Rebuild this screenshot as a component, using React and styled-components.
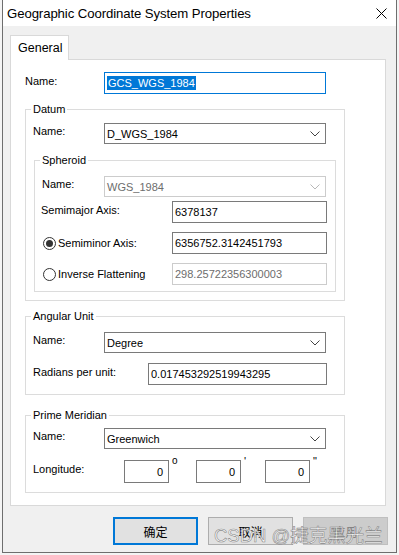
import React from "react";
import styled, { createGlobalStyle } from "styled-components";

const Global = createGlobalStyle`
  html, body {
    margin: 0;
    padding: 0;
    background: #f4f4f4;
    font-family: "Liberation Sans", Arial, sans-serif;
  }
`;

const Window = styled.div`
  position: relative;
  margin-left: 2px;
  width: 393px;
  height: 552px;
  border: 1px solid #6e6e6e;
  border-top: none;
  background: #f0f0f0;
  display: flex;
  flex-direction: column;
`;

const TitleBar = styled.div`
  height: 26px;
  background: #ffffff;
  display: flex;
  align-items: center;
  justify-content: space-between;
  padding: 0 9px 0 4px;
`;

const Title = styled.span`
  font-size: 13.2px;
  color: #000;
  letter-spacing: -0.1px;
`;

const Body = styled.div`
  flex: 1;
  display: flex;
  flex-direction: column;
  padding: 9px 7px 6px 7px;
`;

const Tabs = styled.div`
  display: flex;
  height: 24px;
  position: relative;
  z-index: 1;
`;

const Tab = styled.div`
  width: 59px;
  height: 25px;
  box-sizing: border-box;
  background: #ffffff;
  border: 1px solid #d9d9d9;
  border-bottom: none;
  font-size: 12.5px;
  padding: 5px 0 0 7px;
`;

const Panel = styled.div`
  width: 376px;
  box-sizing: border-box;
  background: #ffffff;
  border: 1px solid #d9d9d9;
  padding: 12px 0 12px 14px;
  display: flex;
  flex-direction: column;
`;

const Group = styled.fieldset`
  margin: ${(p) => p.$mt || 0}px 0 0 ${(p) => p.$ml || 0}px;
  width: ${(p) => p.$w}px;
  box-sizing: border-box;
  border: 1px solid #dcdcdc;
  padding: ${(p) => p.$pt}px 0 ${(p) => p.$pb}px 7px;
  min-width: 0;
  display: flex;
  flex-direction: column;
`;

const Legend = styled.legend`
  font-size: 11px;
  line-height: 13px;
  padding: 0 2px;
  margin-left: -2px;
  color: #000;
`;

const Row = styled.div`
  display: flex;
  align-items: center;
  height: ${(p) => p.$h || 21}px;
  margin-top: ${(p) => p.$mt || 0}px;
  margin-left: ${(p) => p.$ml || 0}px;
`;

const Label = styled.span`
  width: ${(p) => p.$w}px;
  flex-shrink: 0;
  font-size: 11px;
  line-height: 13px;
  padding-bottom: 4px;
  color: #000;
`;

const TextBox = styled.div`
  width: ${(p) => p.$w}px;
  height: 100%;
  box-sizing: border-box;
  border: 1px solid ${(p) => (p.$focus ? "#0078d7" : p.$disabled ? "#cccccc" : "#7a7a7a")};
  background: #ffffff;
  display: flex;
  align-items: center;
  justify-content: ${(p) => (p.$right ? "flex-end" : "flex-start")};
  padding: 0 ${(p) => (p.$right ? 5 : 2)}px 0 2px;
  font-size: 11px;
  color: ${(p) => (p.$disabled ? "#6d6d6d" : "#000")};
`;

const Selected = styled.span`
  background: #0078d7;
  color: #fff;
  padding: 0 1px;
  line-height: 14px;
`;

const Select = styled.div`
  width: 222px;
  height: 100%;
  box-sizing: border-box;
  border: 1px solid ${(p) => (p.$disabled ? "#cccccc" : "#7a7a7a")};
  background: #ffffff;
  display: flex;
  align-items: center;
  justify-content: space-between;
  padding: 0 5px 0 2px;
  font-size: 11px;
  color: ${(p) => (p.$disabled ? "#6d6d6d" : "#000")};
`;

const RadioWrap = styled.span`
  width: 129px;
  flex-shrink: 0;
  display: flex;
  align-items: center;
  gap: 2px;
  font-size: 11px;
`;

const RadioDot = styled.span`
  width: 13px;
  height: 13px;
  box-sizing: border-box;
  border-radius: 50%;
  border: 1px solid #333;
  display: flex;
  align-items: center;
  justify-content: center;
  &::after {
    content: "";
    width: 7px;
    height: 7px;
    border-radius: 50%;
    background: ${(p) => (p.$on ? "#333" : "transparent")};
  }
`;

const Mark = styled.span`
  width: ${(p) => p.$w}px;
  align-self: flex-start;
  font-size: ${(p) => p.$fs || 10}px;
  line-height: 10px;
  margin-top: -4px;
  padding-left: 3px;
  box-sizing: border-box;
`;

const Buttons = styled.div`
  display: flex;
  justify-content: flex-end;
  gap: 10px;
  margin-top: 11px;
  padding-right: 1px;
`;

const Button = styled.div`
  width: 85px;
  height: 28px;
  box-sizing: border-box;
  background: ${(p) => (p.$disabled ? "#cccccc" : "#e1e1e1")};
  border: ${(p) => (p.$default ? "2px solid #0078d7" : p.$disabled ? "1px solid #bfbfbf" : "1px solid #adadad")};
  display: flex;
  align-items: center;
  justify-content: center;
  font-family: "Noto Sans CJK SC", sans-serif;
  font-size: 12px;
  color: ${(p) => (p.$disabled ? "#838383" : "#000")};
`;

const Watermark = styled.div`
  position: absolute;
  left: 211px;
  top: 525px;
  font-family: "Liberation Sans", "Noto Sans CJK SC", sans-serif;
  font-size: 18.5px;
  line-height: 22px;
  color: rgba(255, 255, 255, 0.85);
  -webkit-text-stroke: 0.6px rgba(110, 110, 110, 0.8);
  white-space: nowrap;
`;

const Chevron = ({ disabled }) => (
  <svg width="10" height="6" viewBox="0 0 10 6">
    <path d="M0.5 0.5 L5 5 L9.5 0.5" fill="none" stroke={disabled ? "#b8b8b8" : "#444"} strokeWidth="1" />
  </svg>
);

const CloseIcon = () => (
  <svg width="11" height="11" viewBox="0 0 11 11">
    <path d="M0.5 0.5 L10.5 10.5 M10.5 0.5 L0.5 10.5" stroke="#000" strokeWidth="1" />
  </svg>
);

export default function App() {
  return (
    <>
      <Global />
      <Window>
        <TitleBar>
          <Title>Geographic Coordinate System Properties</Title>
          <CloseIcon />
        </TitleBar>
        <Body>
          <Tabs>
            <Tab>General</Tab>
          </Tabs>
          <Panel>
            <Row $h={22}>
              <Label $w={79}>Name:</Label>
              <TextBox $w={222} $focus>
                <Selected>GCS_WGS_1984</Selected>
              </TextBox>
            </Row>

            <Group $w={320} $mt={9} $pt={7} $pb={8}>
              <Legend>Datum</Legend>
              <Row>
                <Label $w={71}>Name:</Label>
                <Select>
                  D_WGS_1984
                  <Chevron />
                </Select>
              </Row>
              <Group $w={302} $ml={1} $mt={10} $pt={9} $pb={6}>
                <Legend>Spheroid</Legend>
                <Row>
                  <Label $w={62}>Name:</Label>
                  <Select $disabled>
                    WGS_1984
                    <Chevron disabled />
                  </Select>
                </Row>
                <Row $h={22} $mt={4} $ml={-1}>
                  <Label $w={131}>Semimajor Axis:</Label>
                  <TextBox $w={155}>6378137</TextBox>
                </Row>
                <Row $h={22} $mt={9} $ml={1}>
                  <RadioWrap>
                    <RadioDot $on />
                    Semiminor Axis:
                  </RadioWrap>
                  <TextBox $w={155}>6356752.3142451793</TextBox>
                </Row>
                <Row $h={22} $mt={9} $ml={1}>
                  <RadioWrap>
                    <RadioDot />
                    Inverse Flattening
                  </RadioWrap>
                  <TextBox $w={155} $disabled>298.25722356300003</TextBox>
                </Row>
              </Group>
            </Group>

            <Group $w={320} $mt={9} $pt={9} $pb={9}>
              <Legend>Angular Unit</Legend>
              <Row>
                <Label $w={71}>Name:</Label>
                <Select>
                  Degree
                  <Chevron />
                </Select>
              </Row>
              <Row $h={22} $mt={10}>
                <Label $w={115}>Radians per unit:</Label>
                <TextBox $w={179}>0.017453292519943295</TextBox>
              </Row>
            </Group>

            <Group $w={320} $mt={14} $pt={6} $pb={9}>
              <Legend>Prime Meridian</Legend>
              <Row>
                <Label $w={71}>Name:</Label>
                <Select>
                  Greenwich
                  <Chevron />
                </Select>
              </Row>
              <Row $h={23} $mt={11}>
                <Label $w={91}>Longitude:</Label>
                <TextBox $w={45} $right>0</TextBox>
                <Mark $w={27}>o</Mark>
                <TextBox $w={45} $right>0</TextBox>
                <Mark $w={24} $fs={11}>'</Mark>
                <TextBox $w={45} $right>0</TextBox>
                <Mark $w={10} $fs={11}>"</Mark>
              </Row>
            </Group>
          </Panel>
          <Buttons>
            <Button $default>确定</Button>
            <Button>取消</Button>
            <Button $disabled>应用</Button>
          </Buttons>
        </Body>
        <Watermark>CSDN @捷克黑光兰</Watermark>
      </Window>
    </>
  );
}
